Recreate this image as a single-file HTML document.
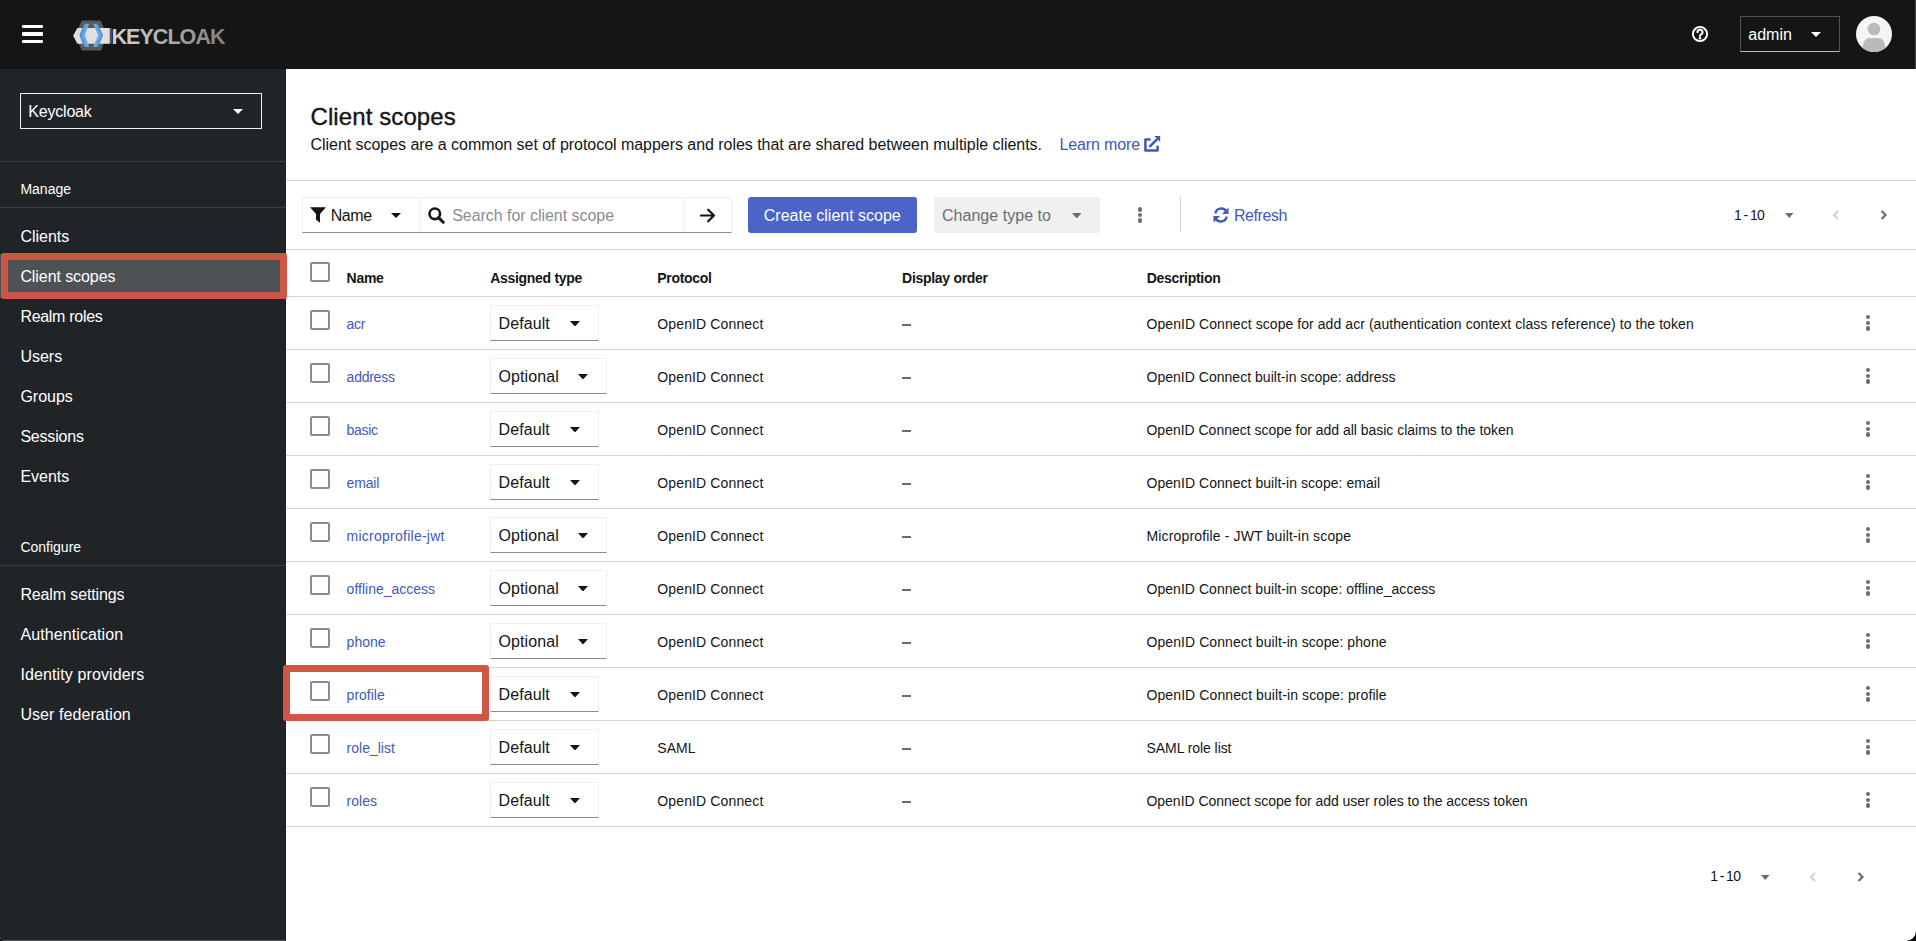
<!DOCTYPE html>
<html><head><meta charset="utf-8"><title>Client scopes</title>
<style>
html,body{margin:0;padding:0;}
body{width:1916px;height:941px;overflow:hidden;position:relative;background:#fff;font-family:"Liberation Sans",sans-serif;}
.t{position:absolute;white-space:nowrap;}
.b{position:absolute;box-sizing:border-box;}
</style></head><body>
<div class="b" style="left:0px;top:0px;width:1916px;height:69px;background:#151515;"></div>
<div class="b" style="left:21.5px;top:24.6px;width:21.2px;height:3.6px;background:#fff;border-radius:1px;"></div>
<div class="b" style="left:21.5px;top:32.2px;width:21.2px;height:3.6px;background:#fff;border-radius:1px;"></div>
<div class="b" style="left:21.5px;top:39.8px;width:21.2px;height:3.6px;background:#fff;border-radius:1px;"></div>
<svg class="b" style="left:70px;top:18px" width="160" height="36" viewBox="0 0 160 36">
<defs><linearGradient id="kg" x1="0" x2="1" y1="0" y2="0"><stop offset="0" stop-color="#d6d6d6"/><stop offset="1" stop-color="#7e7e7e"/></linearGradient></defs>
<polygon points="11.8,2.4 30.5,2.4 37.5,17.6 30.9,32.5 11.8,32.5 5,17.6" fill="#585858"/>
<polygon points="3.1,17.8 7.4,9.9 39.9,9.9 39.9,25.8 7.4,25.8" fill="#e0e0e0"/>
<rect x="39.9" y="9.9" width="2" height="15.9" fill="#505050"/>
<polygon points="14.4,5.8 19.2,5.8 14.9,17.3 19.2,28.9 14.2,28.9 9.5,17.3" fill="#68ade6"/>
<polygon points="14.4,5.8 16.2,5.8 11.6,17.3 16.2,28.9 14.2,28.9 9.5,17.3" fill="#3f86c9" opacity="0.7"/>
<polygon points="23.2,5.8 27.6,5.8 33.1,17.3 27.8,28.9 23.2,28.9 28.1,17.3" fill="#68ade6"/>
<polygon points="25.8,5.8 27.6,5.8 33.1,17.3 27.8,28.9 26,28.9 31,17.3" fill="#3f86c9" opacity="0.6"/>
<text x="41.5" y="25.6" font-family="Liberation Sans" font-weight="700" font-size="21.5" letter-spacing="-0.95" fill="url(#kg)">KEYCLOAK</text>
</svg>
<svg class="b" style="left:1691px;top:25px" width="18" height="18" viewBox="0 0 18 18">
<circle cx="9" cy="9" r="7.1" fill="none" stroke="#fff" stroke-width="1.9"/>
<path d="M6.5 7.2a2.5 2.5 0 1 1 3.5 2.2c-.6.3-1 .7-1 1.4v.3" fill="none" stroke="#fff" stroke-width="2.1" stroke-linecap="round"/>
<circle cx="9" cy="13.3" r="1.25" fill="#fff"/>
</svg>
<div class="b" style="left:1740px;top:16px;width:100px;height:36px;border:1px solid #4f5255;border-bottom-color:#b8bbbe;"></div>
<div class="t" style="left:1748.3px;top:24.56px;font-size:16px;line-height:19px;color:#fff;font-weight:400;">admin</div>
<svg class="b" style="left:1811px;top:32px" width="10" height="5" viewBox="0 0 10 5"><path d="M0 0H10L5.0 5Z" fill="#fff"/></svg>
<svg class="b" style="left:1856px;top:16px" width="36" height="36" viewBox="0 0 36 36">
<defs><clipPath id="av"><circle cx="18" cy="18" r="18"/></clipPath></defs>
<circle cx="18" cy="18" r="18" fill="#f5f5f5"/>
<g clip-path="url(#av)" fill="#b8bbbe">
<circle cx="18" cy="13" r="6.3"/>
<path d="M6.5 36 C6.5 26 9 22 14 22 H22 C27 22 29.5 26 29.5 36Z"/>
</g></svg>
<div class="b" style="left:0px;top:69px;width:286px;height:872px;background:#212427;"></div>
<div class="b" style="left:0px;top:940px;width:285px;height:1px;background:#55575a;"></div>
<div class="b" style="left:1915px;top:0px;width:1px;height:69px;background:#474747;"></div>
<div class="b" style="left:20px;top:93px;width:242px;height:36px;border:1px solid #f0f0f0;"></div>
<div class="t" style="left:28.3px;top:101.96px;font-size:16px;line-height:19px;color:#fff;font-weight:400;letter-spacing:-0.2px;">Keycloak</div>
<svg class="b" style="left:233px;top:109px" width="10" height="5" viewBox="0 0 10 5"><path d="M0 0H10L5.0 5Z" fill="#fff"/></svg>
<div class="b" style="left:0px;top:161px;width:286px;height:1px;background:#3c3f42;"></div>
<div class="b" style="left:0px;top:207px;width:286px;height:1px;background:#3c3f42;"></div>
<div class="b" style="left:0px;top:565px;width:286px;height:1px;background:#3c3f42;"></div>
<div class="t" style="left:20.4px;top:180.95px;font-size:14px;line-height:17px;color:#fff;font-weight:400;">Manage</div>
<div class="t" style="left:20.4px;top:538.95px;font-size:14px;line-height:17px;color:#fff;font-weight:400;">Configure</div>
<div class="b" style="left:0px;top:254px;width:286px;height:44px;background:#4f5255;"></div>
<div class="t" style="left:20.4px;top:227.16px;font-size:16px;line-height:19px;color:#fff;font-weight:400;">Clients</div>
<div class="t" style="left:20.4px;top:267.16px;font-size:16px;line-height:19px;color:#fff;font-weight:400;letter-spacing:-0.08px;">Client scopes</div>
<div class="t" style="left:20.4px;top:307.16px;font-size:16px;line-height:19px;color:#fff;font-weight:400;letter-spacing:-0.3px;">Realm roles</div>
<div class="t" style="left:20.4px;top:347.16px;font-size:16px;line-height:19px;color:#fff;font-weight:400;">Users</div>
<div class="t" style="left:20.4px;top:387.16px;font-size:16px;line-height:19px;color:#fff;font-weight:400;">Groups</div>
<div class="t" style="left:20.4px;top:427.16px;font-size:16px;line-height:19px;color:#fff;font-weight:400;letter-spacing:-0.2px;">Sessions</div>
<div class="t" style="left:20.4px;top:467.16px;font-size:16px;line-height:19px;color:#fff;font-weight:400;">Events</div>
<div class="t" style="left:20.4px;top:584.96px;font-size:16px;line-height:19px;color:#fff;font-weight:400;letter-spacing:-0.13px;">Realm settings</div>
<div class="t" style="left:20.4px;top:624.96px;font-size:16px;line-height:19px;color:#fff;font-weight:400;letter-spacing:0.1px;">Authentication</div>
<div class="t" style="left:20.4px;top:664.96px;font-size:16px;line-height:19px;color:#fff;font-weight:400;letter-spacing:0.12px;">Identity providers</div>
<div class="t" style="left:20.4px;top:704.96px;font-size:16px;line-height:19px;color:#fff;font-weight:400;letter-spacing:0.07px;">User federation</div>
<div class="t" style="left:310.5px;top:102.18px;font-size:24px;line-height:29px;color:#151515;font-weight:400;letter-spacing:0.1px;-webkit-text-stroke:0.35px #151515;">Client scopes</div>
<div class="t" style="left:310.5px;top:134.96px;font-size:16px;line-height:19px;color:#151515;font-weight:400;letter-spacing:-0.04px;">Client scopes are a common set of protocol mappers and roles that are shared between multiple clients.</div>
<div class="t" style="left:1059.5px;top:134.96px;font-size:16px;line-height:19px;color:#4259b8;font-weight:400;letter-spacing:-0.13px;">Learn more</div>
<svg class="b" style="left:1144px;top:136px" width="17" height="17" viewBox="0 0 17 17">
<path d="M6.6 3.4H1.4V14.6H13.6V9.8" fill="none" stroke="#4259b8" stroke-width="2.5" stroke-linejoin="round"/>
<path d="M10.2 0H16.2V6Z" fill="#4259b8"/>
<path d="M13.3 3L5.4 10.9" stroke="#4259b8" stroke-width="2.5"/>
</svg>
<div class="b" style="left:286px;top:180px;width:1630px;height:1px;background:#d2d2d2;"></div>
<div class="b" style="left:302px;top:197px;width:430px;height:36px;border:1px solid #f0f0f0;border-bottom:1px solid #8a8d90;"></div>
<div class="b" style="left:420px;top:197px;width:1px;height:35px;background:#f0f0f0;"></div>
<div class="b" style="left:684px;top:197px;width:1px;height:35px;background:#f0f0f0;"></div>
<svg class="b" style="left:310px;top:207px" width="16" height="16" viewBox="0 0 16 16">
<path d="M0 0.3H16L10 7V15.7L6 12.8V7Z" fill="#151515"/></svg>
<div class="t" style="left:330.7px;top:205.76px;font-size:16px;line-height:19px;color:#151515;font-weight:400;letter-spacing:-0.4px;">Name</div>
<svg class="b" style="left:391.3px;top:213px" width="10" height="5" viewBox="0 0 10 5"><path d="M0 0H10L5.0 5Z" fill="#151515"/></svg>
<svg class="b" style="left:428px;top:207px" width="17" height="17" viewBox="0 0 17 17">
<circle cx="6.8" cy="6.8" r="5.3" fill="none" stroke="#151515" stroke-width="2.6"/>
<path d="M10.6 10.6L15.2 15.2" stroke="#151515" stroke-width="3" stroke-linecap="round"/></svg>
<div class="t" style="left:452.2px;top:205.96px;font-size:16px;line-height:19px;color:#8a8d90;font-weight:400;letter-spacing:-0.04px;">Search for client scope</div>
<svg class="b" style="left:700px;top:208px" width="16" height="15" viewBox="0 0 16 15">
<path d="M1 7.5H14M8.2 1.7L14 7.5L8.2 13.3" fill="none" stroke="#151515" stroke-width="2.2" stroke-linecap="round" stroke-linejoin="round"/></svg>
<div class="b" style="left:748px;top:197px;width:169px;height:36px;background:#4c63c8;border-radius:3px;"></div>
<div class="t" style="left:763.8px;top:205.76px;font-size:16px;line-height:19px;color:#fff;font-weight:400;">Create client scope</div>
<div class="b" style="left:933.5px;top:197px;width:166.5px;height:35.5px;background:#f0f0f0;"></div>
<div class="t" style="left:942px;top:205.66px;font-size:16px;line-height:19px;color:#6a6e73;font-weight:400;letter-spacing:0.03px;">Change type to</div>
<svg class="b" style="left:1071.6px;top:212.5px" width="9.5" height="5.5" viewBox="0 0 9.5 5.5"><path d="M0 0H9.5L4.75 5.5Z" fill="#6a6e73"/></svg>
<div class="b" style="left:1137.7px;top:207.20000000000002px;width:4.4px;height:4.4px;border-radius:50%;background:#6a6e73;"></div>
<div class="b" style="left:1137.7px;top:212.8px;width:4.4px;height:4.4px;border-radius:50%;background:#6a6e73;"></div>
<div class="b" style="left:1137.7px;top:218.4px;width:4.4px;height:4.4px;border-radius:50%;background:#6a6e73;"></div>
<div class="b" style="left:1180px;top:197px;width:1px;height:35px;background:#d2d2d2;"></div>
<svg class="b" style="left:1213px;top:207px" width="16" height="16" viewBox="0 0 16 16">
<path d="M2.3 6.5A6 6 0 0 1 13.2 4.2" fill="none" stroke="#4259b8" stroke-width="2.4"/>
<path d="M15.5 0.5V7H9Z" fill="#4259b8"/>
<path d="M13.7 9.5A6 6 0 0 1 2.8 11.8" fill="none" stroke="#4259b8" stroke-width="2.4"/>
<path d="M0.5 15.5V9H7Z" fill="#4259b8"/>
</svg>
<div class="t" style="left:1234px;top:205.76px;font-size:16px;line-height:19px;color:#4259b8;font-weight:400;letter-spacing:-0.43px;">Refresh</div>
<div class="t" style="left:1734.1px;top:206.65px;font-size:14px;line-height:17px;color:#151515;font-weight:400;letter-spacing:-0.6px;word-spacing:-1px;">1 - 10</div>
<svg class="b" style="left:1784.8px;top:213px" width="8.5" height="5" viewBox="0 0 8.5 5"><path d="M0 0H8.5L4.25 5Z" fill="#6a6e73"/></svg>
<svg class="b" style="left:1831.8px;top:210.1px" width="8" height="10" viewBox="0 0 8 10"><path d="M6 1L2 5L6 9" fill="none" stroke="#d2d2d2" stroke-width="2.2"/></svg>
<svg class="b" style="left:1880px;top:210.1px" width="8" height="10" viewBox="0 0 8 10"><path d="M1.5 1L5.5 5L1.5 9" fill="none" stroke="#6a6e73" stroke-width="2.2"/></svg>
<div class="b" style="left:286px;top:249px;width:1630px;height:1px;background:#d2d2d2;"></div>
<div class="b" style="left:310px;top:262px;width:20px;height:20px;border:2px solid #8a8d90;border-radius:2px;background:#fff;"></div>
<div class="t" style="left:346.6px;top:269.65px;font-size:14px;line-height:17px;color:#151515;font-weight:700;letter-spacing:-0.3px;">Name</div>
<div class="t" style="left:490.2px;top:269.65px;font-size:14px;line-height:17px;color:#151515;font-weight:700;letter-spacing:-0.3px;">Assigned type</div>
<div class="t" style="left:657.3px;top:269.65px;font-size:14px;line-height:17px;color:#151515;font-weight:700;letter-spacing:-0.3px;">Protocol</div>
<div class="t" style="left:902.1px;top:269.65px;font-size:14px;line-height:17px;color:#151515;font-weight:700;letter-spacing:-0.3px;">Display order</div>
<div class="t" style="left:1146.7px;top:269.65px;font-size:14px;line-height:17px;color:#151515;font-weight:700;letter-spacing:-0.3px;">Description</div>
<div class="b" style="left:286px;top:296px;width:1630px;height:1px;background:#d2d2d2;"></div>
<div class="b" style="left:310px;top:309.5px;width:20px;height:20px;border:2px solid #8a8d90;border-radius:2px;background:#fff;"></div>
<div class="t" style="left:346.6px;top:315.65px;font-size:14px;line-height:17px;color:#4259b8;font-weight:400;letter-spacing:-0.3px;">acr</div>
<div class="b" style="left:490px;top:305px;width:109px;height:36px;border:1px solid #f0f0f0;border-bottom:1px solid #8a8d90;"></div>
<div class="t" style="left:498.5px;top:314.16px;font-size:16px;line-height:19px;color:#151515;font-weight:400;letter-spacing:0.1px;">Default</div>
<svg class="b" style="left:570px;top:320.5px" width="10" height="5.5" viewBox="0 0 10 5.5"><path d="M0 0H10L5.0 5.5Z" fill="#151515"/></svg>
<div class="t" style="left:657.3px;top:315.85px;font-size:14px;line-height:17px;color:#151515;font-weight:400;letter-spacing:0.13px;">OpenID Connect</div>
<div class="b" style="left:902px;top:324px;width:8.5px;height:1.5px;background:#6a6e73;"></div>
<div class="t" style="left:1146.5px;top:315.85px;font-size:14px;line-height:17px;color:#151515;font-weight:400;letter-spacing:0.065px;">OpenID Connect scope for add acr (authentication context class reference) to the token</div>
<div class="b" style="left:1865.7px;top:315.0px;width:4.4px;height:4.4px;border-radius:50%;background:#6a6e73;"></div>
<div class="b" style="left:1865.7px;top:320.6px;width:4.4px;height:4.4px;border-radius:50%;background:#6a6e73;"></div>
<div class="b" style="left:1865.7px;top:326.20000000000005px;width:4.4px;height:4.4px;border-radius:50%;background:#6a6e73;"></div>
<div class="b" style="left:286px;top:349px;width:1630px;height:1px;background:#d2d2d2;"></div>
<div class="b" style="left:310px;top:362.5px;width:20px;height:20px;border:2px solid #8a8d90;border-radius:2px;background:#fff;"></div>
<div class="t" style="left:346.6px;top:368.65px;font-size:14px;line-height:17px;color:#4259b8;font-weight:400;letter-spacing:-0.25px;">address</div>
<div class="b" style="left:490px;top:358px;width:117px;height:36px;border:1px solid #f0f0f0;border-bottom:1px solid #8a8d90;"></div>
<div class="t" style="left:498.5px;top:367.16px;font-size:16px;line-height:19px;color:#151515;font-weight:400;letter-spacing:0.1px;">Optional</div>
<svg class="b" style="left:578px;top:373.5px" width="10" height="5.5" viewBox="0 0 10 5.5"><path d="M0 0H10L5.0 5.5Z" fill="#151515"/></svg>
<div class="t" style="left:657.3px;top:368.85px;font-size:14px;line-height:17px;color:#151515;font-weight:400;letter-spacing:0.13px;">OpenID Connect</div>
<div class="b" style="left:902px;top:377px;width:8.5px;height:1.5px;background:#6a6e73;"></div>
<div class="t" style="left:1146.5px;top:368.85px;font-size:14px;line-height:17px;color:#151515;font-weight:400;letter-spacing:0.023px;">OpenID Connect built-in scope: address</div>
<div class="b" style="left:1865.7px;top:368.0px;width:4.4px;height:4.4px;border-radius:50%;background:#6a6e73;"></div>
<div class="b" style="left:1865.7px;top:373.6px;width:4.4px;height:4.4px;border-radius:50%;background:#6a6e73;"></div>
<div class="b" style="left:1865.7px;top:379.20000000000005px;width:4.4px;height:4.4px;border-radius:50%;background:#6a6e73;"></div>
<div class="b" style="left:286px;top:402px;width:1630px;height:1px;background:#d2d2d2;"></div>
<div class="b" style="left:310px;top:415.5px;width:20px;height:20px;border:2px solid #8a8d90;border-radius:2px;background:#fff;"></div>
<div class="t" style="left:346.6px;top:421.65px;font-size:14px;line-height:17px;color:#4259b8;font-weight:400;letter-spacing:-0.3px;">basic</div>
<div class="b" style="left:490px;top:411px;width:109px;height:36px;border:1px solid #f0f0f0;border-bottom:1px solid #8a8d90;"></div>
<div class="t" style="left:498.5px;top:420.16px;font-size:16px;line-height:19px;color:#151515;font-weight:400;letter-spacing:0.1px;">Default</div>
<svg class="b" style="left:570px;top:426.5px" width="10" height="5.5" viewBox="0 0 10 5.5"><path d="M0 0H10L5.0 5.5Z" fill="#151515"/></svg>
<div class="t" style="left:657.3px;top:421.85px;font-size:14px;line-height:17px;color:#151515;font-weight:400;letter-spacing:0.13px;">OpenID Connect</div>
<div class="b" style="left:902px;top:430px;width:8.5px;height:1.5px;background:#6a6e73;"></div>
<div class="t" style="left:1146.5px;top:421.85px;font-size:14px;line-height:17px;color:#151515;font-weight:400;letter-spacing:-0.017px;">OpenID Connect scope for add all basic claims to the token</div>
<div class="b" style="left:1865.7px;top:421.0px;width:4.4px;height:4.4px;border-radius:50%;background:#6a6e73;"></div>
<div class="b" style="left:1865.7px;top:426.6px;width:4.4px;height:4.4px;border-radius:50%;background:#6a6e73;"></div>
<div class="b" style="left:1865.7px;top:432.20000000000005px;width:4.4px;height:4.4px;border-radius:50%;background:#6a6e73;"></div>
<div class="b" style="left:286px;top:455px;width:1630px;height:1px;background:#d2d2d2;"></div>
<div class="b" style="left:310px;top:468.5px;width:20px;height:20px;border:2px solid #8a8d90;border-radius:2px;background:#fff;"></div>
<div class="t" style="left:346.6px;top:474.65px;font-size:14px;line-height:17px;color:#4259b8;font-weight:400;letter-spacing:-0.2px;">email</div>
<div class="b" style="left:490px;top:464px;width:109px;height:36px;border:1px solid #f0f0f0;border-bottom:1px solid #8a8d90;"></div>
<div class="t" style="left:498.5px;top:473.16px;font-size:16px;line-height:19px;color:#151515;font-weight:400;letter-spacing:0.1px;">Default</div>
<svg class="b" style="left:570px;top:479.5px" width="10" height="5.5" viewBox="0 0 10 5.5"><path d="M0 0H10L5.0 5.5Z" fill="#151515"/></svg>
<div class="t" style="left:657.3px;top:474.85px;font-size:14px;line-height:17px;color:#151515;font-weight:400;letter-spacing:0.13px;">OpenID Connect</div>
<div class="b" style="left:902px;top:483px;width:8.5px;height:1.5px;background:#6a6e73;"></div>
<div class="t" style="left:1146.5px;top:474.85px;font-size:14px;line-height:17px;color:#151515;font-weight:400;letter-spacing:0.048px;">OpenID Connect built-in scope: email</div>
<div class="b" style="left:1865.7px;top:474.0px;width:4.4px;height:4.4px;border-radius:50%;background:#6a6e73;"></div>
<div class="b" style="left:1865.7px;top:479.6px;width:4.4px;height:4.4px;border-radius:50%;background:#6a6e73;"></div>
<div class="b" style="left:1865.7px;top:485.20000000000005px;width:4.4px;height:4.4px;border-radius:50%;background:#6a6e73;"></div>
<div class="b" style="left:286px;top:508px;width:1630px;height:1px;background:#d2d2d2;"></div>
<div class="b" style="left:310px;top:521.5px;width:20px;height:20px;border:2px solid #8a8d90;border-radius:2px;background:#fff;"></div>
<div class="t" style="left:346.6px;top:527.65px;font-size:14px;line-height:17px;color:#4259b8;font-weight:400;letter-spacing:0.25px;">microprofile-jwt</div>
<div class="b" style="left:490px;top:517px;width:117px;height:36px;border:1px solid #f0f0f0;border-bottom:1px solid #8a8d90;"></div>
<div class="t" style="left:498.5px;top:526.16px;font-size:16px;line-height:19px;color:#151515;font-weight:400;letter-spacing:0.1px;">Optional</div>
<svg class="b" style="left:578px;top:532.5px" width="10" height="5.5" viewBox="0 0 10 5.5"><path d="M0 0H10L5.0 5.5Z" fill="#151515"/></svg>
<div class="t" style="left:657.3px;top:527.85px;font-size:14px;line-height:17px;color:#151515;font-weight:400;letter-spacing:0.13px;">OpenID Connect</div>
<div class="b" style="left:902px;top:536px;width:8.5px;height:1.5px;background:#6a6e73;"></div>
<div class="t" style="left:1146.5px;top:527.85px;font-size:14px;line-height:17px;color:#151515;font-weight:400;letter-spacing:0.153px;">Microprofile - JWT built-in scope</div>
<div class="b" style="left:1865.7px;top:526.9999999999999px;width:4.4px;height:4.4px;border-radius:50%;background:#6a6e73;"></div>
<div class="b" style="left:1865.7px;top:532.5999999999999px;width:4.4px;height:4.4px;border-radius:50%;background:#6a6e73;"></div>
<div class="b" style="left:1865.7px;top:538.1999999999999px;width:4.4px;height:4.4px;border-radius:50%;background:#6a6e73;"></div>
<div class="b" style="left:286px;top:561px;width:1630px;height:1px;background:#d2d2d2;"></div>
<div class="b" style="left:310px;top:574.5px;width:20px;height:20px;border:2px solid #8a8d90;border-radius:2px;background:#fff;"></div>
<div class="t" style="left:346.6px;top:580.65px;font-size:14px;line-height:17px;color:#4259b8;font-weight:400;">offline_access</div>
<div class="b" style="left:490px;top:570px;width:117px;height:36px;border:1px solid #f0f0f0;border-bottom:1px solid #8a8d90;"></div>
<div class="t" style="left:498.5px;top:579.16px;font-size:16px;line-height:19px;color:#151515;font-weight:400;letter-spacing:0.1px;">Optional</div>
<svg class="b" style="left:578px;top:585.5px" width="10" height="5.5" viewBox="0 0 10 5.5"><path d="M0 0H10L5.0 5.5Z" fill="#151515"/></svg>
<div class="t" style="left:657.3px;top:580.85px;font-size:14px;line-height:17px;color:#151515;font-weight:400;letter-spacing:0.13px;">OpenID Connect</div>
<div class="b" style="left:902px;top:589px;width:8.5px;height:1.5px;background:#6a6e73;"></div>
<div class="t" style="left:1146.5px;top:580.85px;font-size:14px;line-height:17px;color:#151515;font-weight:400;letter-spacing:0.043px;">OpenID Connect built-in scope: offline_access</div>
<div class="b" style="left:1865.7px;top:579.9999999999999px;width:4.4px;height:4.4px;border-radius:50%;background:#6a6e73;"></div>
<div class="b" style="left:1865.7px;top:585.5999999999999px;width:4.4px;height:4.4px;border-radius:50%;background:#6a6e73;"></div>
<div class="b" style="left:1865.7px;top:591.1999999999999px;width:4.4px;height:4.4px;border-radius:50%;background:#6a6e73;"></div>
<div class="b" style="left:286px;top:614px;width:1630px;height:1px;background:#d2d2d2;"></div>
<div class="b" style="left:310px;top:627.5px;width:20px;height:20px;border:2px solid #8a8d90;border-radius:2px;background:#fff;"></div>
<div class="t" style="left:346.6px;top:633.65px;font-size:14px;line-height:17px;color:#4259b8;font-weight:400;">phone</div>
<div class="b" style="left:490px;top:623px;width:117px;height:36px;border:1px solid #f0f0f0;border-bottom:1px solid #8a8d90;"></div>
<div class="t" style="left:498.5px;top:632.16px;font-size:16px;line-height:19px;color:#151515;font-weight:400;letter-spacing:0.1px;">Optional</div>
<svg class="b" style="left:578px;top:638.5px" width="10" height="5.5" viewBox="0 0 10 5.5"><path d="M0 0H10L5.0 5.5Z" fill="#151515"/></svg>
<div class="t" style="left:657.3px;top:633.85px;font-size:14px;line-height:17px;color:#151515;font-weight:400;letter-spacing:0.13px;">OpenID Connect</div>
<div class="b" style="left:902px;top:642px;width:8.5px;height:1.5px;background:#6a6e73;"></div>
<div class="t" style="left:1146.5px;top:633.85px;font-size:14px;line-height:17px;color:#151515;font-weight:400;letter-spacing:0.078px;">OpenID Connect built-in scope: phone</div>
<div class="b" style="left:1865.7px;top:632.9999999999999px;width:4.4px;height:4.4px;border-radius:50%;background:#6a6e73;"></div>
<div class="b" style="left:1865.7px;top:638.5999999999999px;width:4.4px;height:4.4px;border-radius:50%;background:#6a6e73;"></div>
<div class="b" style="left:1865.7px;top:644.1999999999999px;width:4.4px;height:4.4px;border-radius:50%;background:#6a6e73;"></div>
<div class="b" style="left:286px;top:667px;width:1630px;height:1px;background:#d2d2d2;"></div>
<div class="b" style="left:310px;top:680.5px;width:20px;height:20px;border:2px solid #8a8d90;border-radius:2px;background:#fff;"></div>
<div class="t" style="left:346.6px;top:686.65px;font-size:14px;line-height:17px;color:#4259b8;font-weight:400;">profile</div>
<div class="b" style="left:490px;top:676px;width:109px;height:36px;border:1px solid #f0f0f0;border-bottom:1px solid #8a8d90;"></div>
<div class="t" style="left:498.5px;top:685.16px;font-size:16px;line-height:19px;color:#151515;font-weight:400;letter-spacing:0.1px;">Default</div>
<svg class="b" style="left:570px;top:691.5px" width="10" height="5.5" viewBox="0 0 10 5.5"><path d="M0 0H10L5.0 5.5Z" fill="#151515"/></svg>
<div class="t" style="left:657.3px;top:686.85px;font-size:14px;line-height:17px;color:#151515;font-weight:400;letter-spacing:0.13px;">OpenID Connect</div>
<div class="b" style="left:902px;top:695px;width:8.5px;height:1.5px;background:#6a6e73;"></div>
<div class="t" style="left:1146.5px;top:686.85px;font-size:14px;line-height:17px;color:#151515;font-weight:400;letter-spacing:0.095px;">OpenID Connect built-in scope: profile</div>
<div class="b" style="left:1865.7px;top:685.9999999999999px;width:4.4px;height:4.4px;border-radius:50%;background:#6a6e73;"></div>
<div class="b" style="left:1865.7px;top:691.5999999999999px;width:4.4px;height:4.4px;border-radius:50%;background:#6a6e73;"></div>
<div class="b" style="left:1865.7px;top:697.1999999999999px;width:4.4px;height:4.4px;border-radius:50%;background:#6a6e73;"></div>
<div class="b" style="left:286px;top:720px;width:1630px;height:1px;background:#d2d2d2;"></div>
<div class="b" style="left:310px;top:733.5px;width:20px;height:20px;border:2px solid #8a8d90;border-radius:2px;background:#fff;"></div>
<div class="t" style="left:346.6px;top:739.65px;font-size:14px;line-height:17px;color:#4259b8;font-weight:400;">role_list</div>
<div class="b" style="left:490px;top:729px;width:109px;height:36px;border:1px solid #f0f0f0;border-bottom:1px solid #8a8d90;"></div>
<div class="t" style="left:498.5px;top:738.16px;font-size:16px;line-height:19px;color:#151515;font-weight:400;letter-spacing:0.1px;">Default</div>
<svg class="b" style="left:570px;top:744.5px" width="10" height="5.5" viewBox="0 0 10 5.5"><path d="M0 0H10L5.0 5.5Z" fill="#151515"/></svg>
<div class="t" style="left:657.3px;top:739.85px;font-size:14px;line-height:17px;color:#151515;font-weight:400;">SAML</div>
<div class="b" style="left:902px;top:748px;width:8.5px;height:1.5px;background:#6a6e73;"></div>
<div class="t" style="left:1146.5px;top:739.85px;font-size:14px;line-height:17px;color:#151515;font-weight:400;letter-spacing:-0.064px;">SAML role list</div>
<div class="b" style="left:1865.7px;top:738.9999999999999px;width:4.4px;height:4.4px;border-radius:50%;background:#6a6e73;"></div>
<div class="b" style="left:1865.7px;top:744.5999999999999px;width:4.4px;height:4.4px;border-radius:50%;background:#6a6e73;"></div>
<div class="b" style="left:1865.7px;top:750.1999999999999px;width:4.4px;height:4.4px;border-radius:50%;background:#6a6e73;"></div>
<div class="b" style="left:286px;top:773px;width:1630px;height:1px;background:#d2d2d2;"></div>
<div class="b" style="left:310px;top:786.5px;width:20px;height:20px;border:2px solid #8a8d90;border-radius:2px;background:#fff;"></div>
<div class="t" style="left:346.6px;top:792.65px;font-size:14px;line-height:17px;color:#4259b8;font-weight:400;">roles</div>
<div class="b" style="left:490px;top:782px;width:109px;height:36px;border:1px solid #f0f0f0;border-bottom:1px solid #8a8d90;"></div>
<div class="t" style="left:498.5px;top:791.16px;font-size:16px;line-height:19px;color:#151515;font-weight:400;letter-spacing:0.1px;">Default</div>
<svg class="b" style="left:570px;top:797.5px" width="10" height="5.5" viewBox="0 0 10 5.5"><path d="M0 0H10L5.0 5.5Z" fill="#151515"/></svg>
<div class="t" style="left:657.3px;top:792.85px;font-size:14px;line-height:17px;color:#151515;font-weight:400;letter-spacing:0.13px;">OpenID Connect</div>
<div class="b" style="left:902px;top:801px;width:8.5px;height:1.5px;background:#6a6e73;"></div>
<div class="t" style="left:1146.5px;top:792.85px;font-size:14px;line-height:17px;color:#151515;font-weight:400;letter-spacing:-0.03px;">OpenID Connect scope for add user roles to the access token</div>
<div class="b" style="left:1865.7px;top:791.9999999999999px;width:4.4px;height:4.4px;border-radius:50%;background:#6a6e73;"></div>
<div class="b" style="left:1865.7px;top:797.5999999999999px;width:4.4px;height:4.4px;border-radius:50%;background:#6a6e73;"></div>
<div class="b" style="left:1865.7px;top:803.1999999999999px;width:4.4px;height:4.4px;border-radius:50%;background:#6a6e73;"></div>
<div class="b" style="left:286px;top:826px;width:1630px;height:1px;background:#d2d2d2;"></div>
<div class="t" style="left:1710.3px;top:868.45px;font-size:14px;line-height:17px;color:#151515;font-weight:400;letter-spacing:-0.6px;word-spacing:-1px;">1 - 10</div>
<svg class="b" style="left:1761px;top:874.8px" width="8.5" height="5" viewBox="0 0 8.5 5"><path d="M0 0H8.5L4.25 5Z" fill="#6a6e73"/></svg>
<svg class="b" style="left:1808.5px;top:871.9px" width="8" height="10" viewBox="0 0 8 10"><path d="M6 1L2 5L6 9" fill="none" stroke="#d2d2d2" stroke-width="2.2"/></svg>
<svg class="b" style="left:1856.5px;top:871.9px" width="8" height="10" viewBox="0 0 8 10"><path d="M1.5 1L5.5 5L1.5 9" fill="none" stroke="#6a6e73" stroke-width="2.2"/></svg>
<div class="b" style="left:1px;top:253px;width:285.5px;height:46px;border:7px solid #cc5744;border-radius:3px;"></div>
<div class="b" style="left:283px;top:665px;width:206px;height:56px;border:7px solid #cc5744;border-radius:3px;"></div>
<svg class="b" style="left:0px;top:936px" width="5" height="5" viewBox="0 0 5 5"><path d="M0 0A5 5 0 0 0 5 5H0Z" fill="#050505"/><path d="M0 0.3A4.7 4.7 0 0 0 4.7 5" fill="none" stroke="#4a4b4e" stroke-width="1"/></svg>
<svg class="b" style="left:1906px;top:931px" width="10" height="10" viewBox="0 0 10 10"><path d="M10 0V10H0A10 10 0 0 0 10 0Z" fill="#000"/></svg>
</body></html>
